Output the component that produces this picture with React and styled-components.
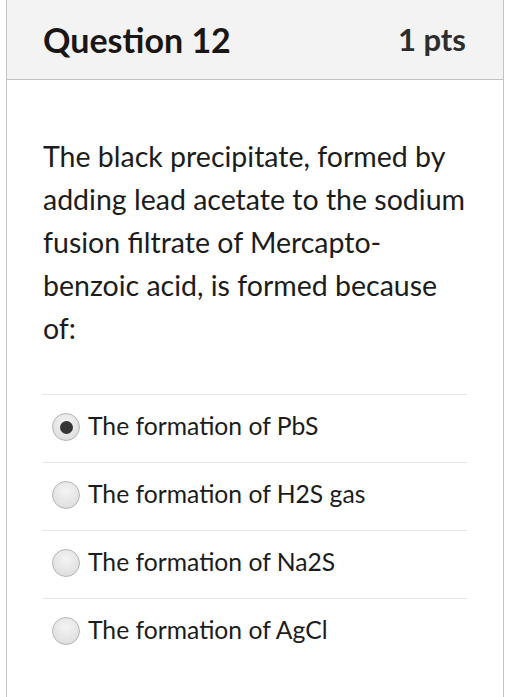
import React from "react";
import styled, { createGlobalStyle } from "styled-components";

const Global = createGlobalStyle`
  html, body { margin: 0; padding: 0; background: #ffffff; }
  body { font-family: Lato, "Open Sans", sans-serif; color: #1c1c1c; }
`;

const Card = styled.div`
  margin-left: 6px;
  width: 498px;
  height: 697px;
  box-sizing: border-box;
  border-left: 1.5px solid #c4c4c4;
  border-right: 1.5px solid #c4c4c4;
  background: #fff;
`;

const Header = styled.div`
  height: 80px;
  box-sizing: border-box;
  background: #f3f3f3;
  border-bottom: 1.5px solid #c4c4c4;
  display: flex;
  align-items: center;
  justify-content: space-between;
  padding: 0 37px 0 36px;
`;

const Title = styled.div`
  font-weight: 700;
  font-size: 34px;
  color: #1a1616;
  padding-bottom: 1px;
`;

const Points = styled.div`
  font-weight: 700;
  font-size: 31px;
  color: #2d2d2d;
  padding-bottom: 1px;
`;

const Body = styled.div`
  padding: 55px 0 0 36px;
`;

const Prompt = styled.p`
  margin: 0;
  width: 426px;
  font-size: 28.5px;
  line-height: 43px;
  color: #1c1c1c;
`;

const Answers = styled.div`
  margin-top: 44px;
  width: 424px;
`;

const Answer = styled.label`
  display: flex;
  align-items: center;
  gap: 8px;
  height: 68px;
  border-top: 1.5px solid #e4e4e4;
  box-sizing: border-box;
  padding-left: 9px;
  padding-bottom: 6px;
  font-size: 24.7px;
  color: #1c1c1c;
`;

const Radio = styled.span`
  width: 28px;
  height: 28px;
  border-radius: 50%;
  box-sizing: border-box;
  border: 1.5px solid #b5b5b5;
  background: radial-gradient(circle at 50% 35%, #f4f4f4 0%, #d9d9d9 100%);
  display: flex;
  align-items: center;
  justify-content: center;
  flex-shrink: 0;
  margin-top: 3px;
  &::after {
    content: "";
    width: 13px;
    height: 13px;
    border-radius: 50%;
    background: #353535;
    display: ${(p) => (p.$checked ? "block" : "none")};
  }
`;

const answers = [
  { text: "The formation of PbS", checked: true },
  { text: "The formation of H2S gas" },
  { text: "The formation of Na2S" },
  { text: "The formation of AgCl" },
];

export default function App() {
  return (
    <>
      <Global />
      <Card>
        <Header>
          <Title>Question 12</Title>
          <Points>1 pts</Points>
        </Header>
        <Body>
          <Prompt>
            The black precipitate, formed by adding lead acetate to the sodium
            fusion filtrate of Mercapto-benzoic acid, is formed because of:
          </Prompt>
          <Answers>
            {answers.map((a) => (
              <Answer key={a.text}>
                <Radio $checked={a.checked} />
                {a.text}
              </Answer>
            ))}
          </Answers>
        </Body>
      </Card>
    </>
  );
}
